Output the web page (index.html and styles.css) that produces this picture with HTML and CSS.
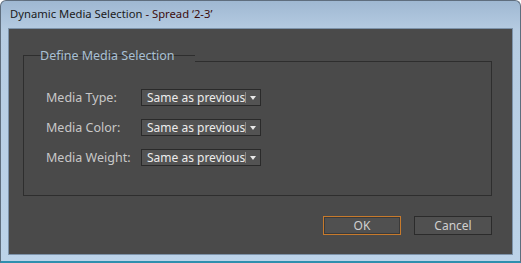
FILE: index.html
```html
<!DOCTYPE html>
<html>
<head lang="en">
    <meta charset="UTF-8">
    <title>Dynamic Media Selection</title>
    <link rel="stylesheet" href="styles.css">
</head>
<body>
<div class="window">
    <div class="title-bar">
        <span class="title-main">Dynamic Media Selection</span>
        <span class="title-sub">- Spread ‘2-3’</span>
    </div>
    <div class="client">
        <div class="group">
            <div class="legend"><span>Define Media Selection</span></div>
            <div class="form-rows">
                <label class="form-label">Media Type:</label>
                <div class="select"><span class="select-text">Same as previous</span><span class="select-arrow"></span></div>
                <label class="form-label">Media Color:</label>
                <div class="select"><span class="select-text">Same as previous</span><span class="select-arrow"></span></div>
                <label class="form-label">Media Weight:</label>
                <div class="select"><span class="select-text">Same as previous</span><span class="select-arrow"></span></div>
            </div>
        </div>
        <div class="button-row">
            <a href="javascript:void(0);" class="btn btn-default">OK</a>
            <a href="javascript:void(0);" class="btn">Cancel</a>
        </div>
    </div>
</div>
</body>
</html>
```

FILE: styles.css
```css
html, body {
    margin: 0px;
    padding: 0px;
    background: #ffffff;
}
div, span, a, label {
    margin: 0px;
    padding: 0px;
}
.window {
    width: 521px;
    height: 263px;
    box-sizing: border-box;
    border: 1px solid #5f6e7e;
    border-bottom: 2px solid #2f8fae;
    border-radius: 6px 6px 0px 0px;
    background: linear-gradient(to bottom, #9fb8d2 0px, #b6cce2 30px, #bcd3e9 100%);
    padding: 0px 7px 6px 7px;
    display: flex;
    flex-direction: column;
    font-family: "Noto Sans", "Open Sans", sans-serif;
}
.title-bar {
    height: 27px;
    line-height: 26px;
    padding-left: 2px;
    font-size: 11.25px;
    white-space: nowrap;
}
.title-main {
    color: #1b1b1b;
}
.title-sub {
    color: #3c0c0c;
}
.client {
    flex: 1;
    background: #4a4a4a;
    border: 1px solid #7d93aa;
    padding: 32px 20px 0px 14px;
    display: flex;
    flex-direction: column;
}
.group {
    position: relative;
    height: 135px;
    box-sizing: border-box;
    border: 1px solid #2e2e2e;
    padding: 27px 0px 0px 22px;
}
.legend {
    position: absolute;
    left: -1px;
    top: -7px;
    width: 155px;
    height: 11px;
    padding-left: 16px;
    border-top: 1px solid #2e2e2e;
    border-left: 1px solid #2e2e2e;
    background: #4a4a4a;
}
.legend span {
    display: block;
    margin-top: -9px;
    line-height: 18px;
    font-size: 12.5px;
    color: #a9c0d4;
    white-space: nowrap;
}
.form-rows {
    display: grid;
    grid-template-columns: 95px 120px;
    row-gap: 13px;
    align-items: center;
}
.form-label {
    font-size: 12.5px;
    color: #c8c8c8;
    line-height: 17px;
    white-space: nowrap;
}
.select {
    height: 17px;
    box-sizing: border-box;
    border: 1px solid #2a2a2a;
    background: #535353;
    display: flex;
    align-items: center;
    overflow: hidden;
}
.select-text {
    flex: 1;
    padding-left: 5px;
    font-size: 12px;
    color: #ececec;
    line-height: 15px;
    white-space: nowrap;
    overflow: hidden;
}
.select-arrow {
    flex: none;
    width: 14px;
    height: 11px;
    border-left: 1px solid #8c8c8c;
    position: relative;
}
.select-arrow:after {
    content: "";
    position: absolute;
    left: 4px;
    top: 4px;
    border-left: 3px solid transparent;
    border-right: 3px solid transparent;
    border-top: 4px solid #e8e8e8;
}
.button-row {
    display: flex;
    justify-content: flex-end;
    align-items: center;
    gap: 13px;
    margin-top: 20px;
}
a {
    text-decoration: none;
}
.btn {
    display: block;
    width: 76px;
    height: 17px;
    border: 1px solid #2b2b2b;
    background: #505050;
    color: #cfcfcf;
    font-size: 12px;
    line-height: 17px;
    text-align: center;
}
.btn-default {
    width: 78px;
    height: 19px;
    box-sizing: border-box;
    border: 1px solid #c77a2c;
    box-shadow: inset 0px 0px 0px 1px #3a3a3a;
    line-height: 17px;
}
```
